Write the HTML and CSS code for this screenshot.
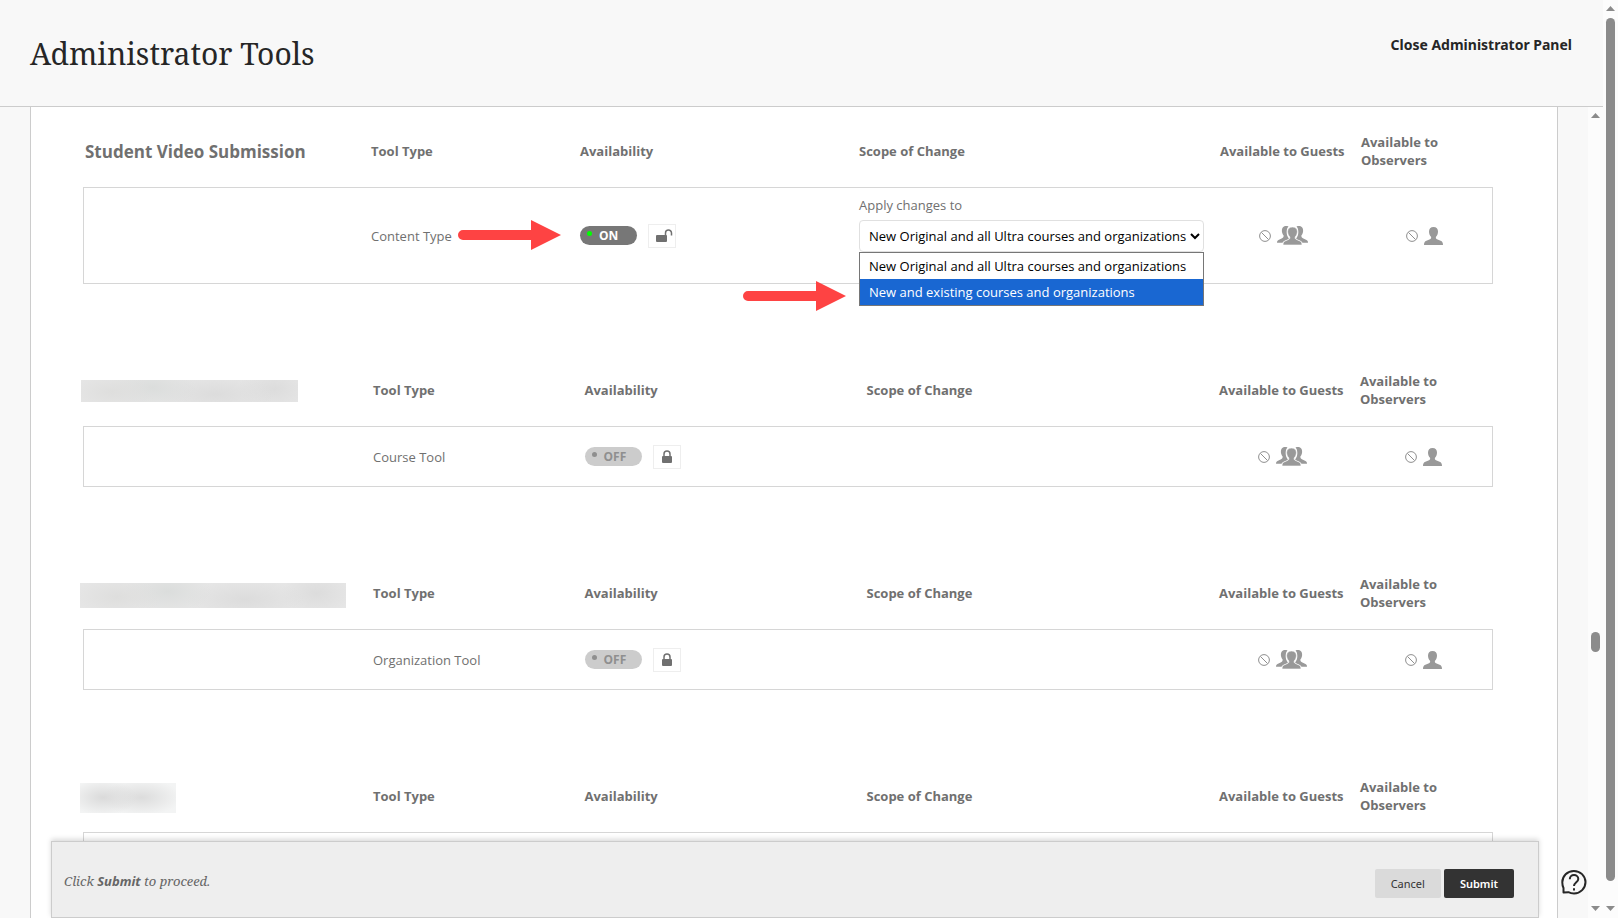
FILE: index.html
```html
<!DOCTYPE html>
<html lang="en">
<head>
    <meta charset="UTF-8">
    <meta name="viewport" content="width=device-width, initial-scale=1.0">
    <title>Administrator Tools</title>
    <link rel="stylesheet" href="styles.css">
</head>
<body>

    <!-- Shared icons -->
    <svg class="sprite" aria-hidden="true">
        <symbol id="icon-none" viewBox="0 0 12 12">
            <circle cx="6" cy="6" r="5.4" fill="none" stroke="#8f8f8f"/>
            <path d="M2.5 2.5l7 7" stroke="#8f8f8f" fill="none"/>
        </symbol>
        <symbol id="icon-person" viewBox="0 0 19 18">
            <path fill="#999" d="M9.5 0C6.5 0 5 1.8 5 4.5c0 2 .7 4 2 5.300.4 1.200.1 2-1 2.500L1.800 14C.7 14.600 0 15.800 0 18h19c0-2.200-.7-3.400-1.800-4L13 12.300c-1.100-.5-1.400-1.300-1-2.500 1.300-1.300 2-3.300 2-5.300C14 1.800 12.500 0 9.500 0z"/>
        </symbol>
        <symbol id="icon-people" viewBox="0 0 31 19">
            <path fill="#999" d="M11.500.5C9.500-.3 7.200 0 6 1.200 4.800 2.500 4.700 4.800 5.100 6.500c.3 1.300.9 2.300 1.500 3 .2 1.500-.6 2.300-2 2.900L1.500 14C.5 14.500 0 15.300 0 16.700h5.500c.6-1.300 1.700-1.900 3.500-2.500 1.700-.5 2.900-1 2.800-1.700C10.500 10.500 9.500 8.500 9.700 5.500 9.800 3.300 10.300 1.700 11.500.5z"/>
            <path fill="#999" transform="matrix(-1 0 0 1 31 0)" d="M11.500.5C9.500-.3 7.200 0 6 1.200 4.800 2.500 4.700 4.800 5.100 6.500c.3 1.300.9 2.300 1.500 3 .2 1.500-.6 2.300-2 2.900L1.500 14C.5 14.500 0 15.300 0 16.700h5.500c.6-1.300 1.700-1.900 3.500-2.500 1.700-.5 2.900-1 2.800-1.700C10.500 10.500 9.500 8.500 9.700 5.500 9.800 3.300 10.300 1.700 11.500.5z"/>
            <path fill="#999" stroke="#fff" stroke-width=".6" d="M15.500 1c-3.200 0-4.900 1.800-4.900 4.500 0 2 .8 4 2.100 5.300.4 1.400 0 2.200-1.200 2.700L8 15c-1.200.6-1.900 1.700-2 4h19c-.1-2.300-.8-3.400-2-4l-3.500-1.500c-1.200-.5-1.600-1.300-1.200-2.700 1.300-1.300 2.100-3.300 2.100-5.300C20.400 2.800 18.700 1 15.500 1z"/>
        </symbol>
        <symbol id="icon-lock" viewBox="0 0 12 14">
            <path d="M3 7V4a3 3 0 0 1 6 0v3" fill="none" stroke="#707070" stroke-width="1.5"/>
            <rect x="1" y="6" width="10" height="7" rx="1" fill="#707070"/>
        </symbol>
        <symbol id="icon-unlock" viewBox="0 0 17 14">
            <path d="M9.500 7V4a3 3 0 0 1 6 0v2.500" fill="none" stroke="#707070" stroke-width="1.5"/>
            <rect x="0" y="6" width="11" height="7" rx="1" fill="#707070"/>
        </symbol>
        <symbol id="icon-arrow" viewBox="0 0 103 30">
            <path d="M5 10h68V0l30 15-30 15V20H5a5 5 0 0 1 0-10z" fill="#fe4343"/>
        </symbol>
    </svg>

    <div class="window">
        <div class="main">
            <header class="page-header">
                <h1>Administrator Tools</h1>
                <a href="#" class="close-link">Close Administrator Panel</a>
            </header>

            <div class="frame">
                <div class="viewport">
                    <main class="panel">

                        <table class="tool current">
                            <thead>
                                <tr>
                                    <th class="col-name"><h2>Student Video Submission</h2></th>
                                    <th class="col-type">Tool Type</th>
                                    <th class="col-avail">Availability</th>
                                    <th class="col-scope">Scope of Change</th>
                                    <th class="col-guests">Available to Guests</th>
                                    <th>Available to<br>Observers</th>
                                </tr>
                            </thead>
                            <tbody>
                                <tr>
                                    <td></td>
                                    <td>Content Type</td>
                                    <td>
                                        <div class="avail">
                                            <svg class="arrow arrow-toggle" aria-hidden="true"><use href="#icon-arrow"/></svg>
                                            <button type="button" class="toggle on">ON</button>
                                            <button type="button" class="lock" aria-label="Lock"><svg width="17" height="14"><use href="#icon-unlock"/></svg></button>
                                        </div>
                                    </td>
                                    <td>
                                        <div class="scope">
                                            <label for="scope">Apply changes to</label>
                                            <select id="scope">
                                                <option>New Original and all Ultra courses and organizations</option>
                                                <option>New and existing courses and organizations</option>
                                            </select>
                                            <div class="popup">
                                                <svg class="arrow arrow-option" aria-hidden="true"><use href="#icon-arrow"/></svg>
                                                <ul role="listbox">
                                                    <li role="option">New Original and all Ultra courses and organizations</li>
                                                    <li role="option" class="selected">New and existing courses and organizations</li>
                                                </ul>
                                            </div>
                                        </div>
                                    </td>
                                    <td><div class="status guests"><svg width="12" height="12"><use href="#icon-none"/></svg><svg width="31" height="19"><use href="#icon-people"/></svg></div></td>
                                    <td><div class="status"><svg width="12" height="12"><use href="#icon-none"/></svg><svg width="19" height="18"><use href="#icon-person"/></svg></div></td>
                                </tr>
                            </tbody>
                        </table>

                        <table class="tool">
                            <thead>
                                <tr>
                                    <th class="col-name"><div class="redacted redacted-course"></div></th>
                                    <th class="col-type">Tool Type</th>
                                    <th class="col-avail">Availability</th>
                                    <th class="col-scope">Scope of Change</th>
                                    <th class="col-guests">Available to Guests</th>
                                    <th>Available to<br>Observers</th>
                                </tr>
                            </thead>
                            <tbody>
                                <tr>
                                    <td></td>
                                    <td>Course Tool</td>
                                    <td>
                                        <div class="avail">
                                            <button type="button" class="toggle">OFF</button>
                                            <button type="button" class="lock" aria-label="Unlock"><svg width="12" height="14"><use href="#icon-lock"/></svg></button>
                                        </div>
                                    </td>
                                    <td></td>
                                    <td><div class="status guests"><svg width="12" height="12"><use href="#icon-none"/></svg><svg width="31" height="19"><use href="#icon-people"/></svg></div></td>
                                    <td><div class="status"><svg width="12" height="12"><use href="#icon-none"/></svg><svg width="19" height="18"><use href="#icon-person"/></svg></div></td>
                                </tr>
                            </tbody>
                        </table>

                        <table class="tool">
                            <thead>
                                <tr>
                                    <th class="col-name"><div class="redacted redacted-org"></div></th>
                                    <th class="col-type">Tool Type</th>
                                    <th class="col-avail">Availability</th>
                                    <th class="col-scope">Scope of Change</th>
                                    <th class="col-guests">Available to Guests</th>
                                    <th>Available to<br>Observers</th>
                                </tr>
                            </thead>
                            <tbody>
                                <tr>
                                    <td></td>
                                    <td>Organization Tool</td>
                                    <td>
                                        <div class="avail">
                                            <button type="button" class="toggle">OFF</button>
                                            <button type="button" class="lock" aria-label="Unlock"><svg width="12" height="14"><use href="#icon-lock"/></svg></button>
                                        </div>
                                    </td>
                                    <td></td>
                                    <td><div class="status guests"><svg width="12" height="12"><use href="#icon-none"/></svg><svg width="31" height="19"><use href="#icon-people"/></svg></div></td>
                                    <td><div class="status"><svg width="12" height="12"><use href="#icon-none"/></svg><svg width="19" height="18"><use href="#icon-person"/></svg></div></td>
                                </tr>
                            </tbody>
                        </table>

                        <table class="tool">
                            <thead>
                                <tr>
                                    <th class="col-name"><div class="redacted redacted-grades"></div></th>
                                    <th class="col-type">Tool Type</th>
                                    <th class="col-avail">Availability</th>
                                    <th class="col-scope">Scope of Change</th>
                                    <th class="col-guests">Available to Guests</th>
                                    <th>Available to<br>Observers</th>
                                </tr>
                            </thead>
                            <tbody>
                                <tr>
                                    <td></td>
                                    <td></td>
                                    <td></td>
                                    <td></td>
                                    <td></td>
                                    <td></td>
                                </tr>
                            </tbody>
                        </table>

                    </main>

                    <!-- Sticky submit bar -->
                    <footer class="submit-bar">
                        <p>Click <strong>Submit</strong> to proceed.</p>
                        <div class="actions">
                            <button type="button" class="btn">Cancel</button>
                            <button type="submit" class="btn primary">Submit</button>
                        </div>
                    </footer>

                    <button type="button" class="help" aria-label="Help">
                        <svg width="26" height="26" viewBox="0 0 26 26" fill="none" stroke="#262626" stroke-width="2">
                            <path d="M2.500 23.500V19C1.600 17.200 1.300 15.500 1.300 13.300A11.600 11.300 0 1 1 13 24.500c-2.200 0-3.900-.4-5.600-1.300z" stroke-linejoin="round"/>
                            <path d="M8.800 10.200C8.800 7.800 10.600 6 13 6s4.300 1.700 4.300 3.900c0 3.100-4.300 3.500-4.300 7.100"/>
                            <path d="M13 19.200v2.200"/>
                        </svg>
                    </button>
                </div>

                <div class="scrollbar">
                    <i class="up"></i>
                    <div class="track"><div class="thumb thumb-small"></div></div>
                    <i class="down"></i>
                </div>
            </div>
        </div>

        <div class="scrollbar">
            <i class="up"></i>
            <div class="track"><div class="thumb"></div></div>
            <i class="down"></i>
        </div>
    </div>

</body>
</html>
```
FILE: styles.css
```css
* {
    box-sizing: border-box;
}

body {
    margin: 0;
    font-family: "Open Sans", "Noto Sans", sans-serif;
    font-size: 13px;
    line-height: 18px;
    color: #707070;
    background-color: #f8f8f8;
}

h1, h2, p, ul {
    margin: 0;
    padding: 0;
}

button {
    font-family: inherit;
    cursor: pointer;
}

svg {
    display: block;
    flex: none;
}

.sprite {
    position: absolute;
    width: 0;
    height: 0;
}

.window {
    display: flex;
    height: 100vh;
    overflow: hidden;
}

.main {
    flex: 1;
    min-width: 0;
    display: flex;
    flex-direction: column;
}

/* Header */
.page-header {
    flex: none;
    display: flex;
    justify-content: space-between;
    align-items: flex-start;
    height: 107px;
    padding: 32px 31px 0 30px;
    border-bottom: 1px solid #ccc;
}

.page-header h1 {
    font-family: "Noto Serif", "DejaVu Serif Condensed", serif;
    font-size: 30px;
    font-weight: normal;
    line-height: 43px;
    color: #262626;
}

.close-link {
    margin-top: 4px;
    font-family: "Noto Sans", "Open Sans", sans-serif;
    font-size: 14px;
    font-weight: bold;
    color: #262626;
    text-decoration: none;
}

/* Content frame */
.frame {
    flex: 1;
    min-height: 0;
    display: flex;
}

.viewport {
    position: relative;
    flex: 1;
    min-width: 0;
    padding: 0 30px;
    overflow: hidden;
}

.panel {
    min-height: 100%;
    padding: 8px 64px 0 52px;
    background-color: #fff;
    border: 1px solid #ccc;
    border-width: 0 1px;
}

/* Tool tables */
.tool {
    width: 100%;
    table-layout: fixed;
    border-spacing: 0;
    margin-bottom: 70px;
}

.tool th, .tool td {
    padding: 0 0 0 2px;
    text-align: left;
}

.tool th {
    height: 72px;
    white-space: nowrap;
}

.tool td {
    height: 61px;
    border: 1px solid #d6d6d6;
    border-width: 1px 0;
}

.tool td:first-child {
    border-left-width: 1px;
}

.tool td:last-child {
    border-right-width: 1px;
}

.tool h2 {
    padding-top: 2px;
    font-size: 17px;
    line-height: 24px;
}

.current td {
    height: 97px;
}

.col-name { width: 288px; }
.col-type { width: 15%; }
.col-avail { width: 20%; }
.col-scope { width: 25%; }
.col-guests { width: 10%; }

.current .col-name { width: 286px; }
.current .col-type { width: 209px; }
.current .col-avail { width: 279px; }
.current .col-scope { width: 361px; }

.avail {
    position: relative;
    display: flex;
    align-items: center;
    gap: 11px;
}

.toggle {
    display: flex;
    align-items: center;
    gap: 7px;
    width: 57px;
    height: 19px;
    padding: 0 0 0 7px;
    border: 0;
    border-radius: 10px;
    background-color: #ccc;
    color: #8f8f8f;
    font-size: 12px;
    font-weight: bold;
    line-height: 19px;
}

.toggle::before {
    content: "";
    width: 5px;
    height: 5px;
    margin-bottom: 4px;
    border-radius: 50%;
    background-color: #8f8f8f;
}

.toggle.on {
    background-color: #777;
    color: #fff;
}

.toggle.on::before {
    background-color: #0f0;
}

.lock {
    display: flex;
    align-items: center;
    justify-content: center;
    width: 28px;
    height: 24px;
    padding: 0;
    border: 1px solid #eee;
    background-color: #fff;
}

.current .lock {
    padding-left: 4px;
}

.status {
    display: flex;
    align-items: center;
    justify-content: center;
    gap: 6px;
    padding-right: 5px;
}

.status.guests {
    padding-right: 12px;
}

/* Scope drop-down with its open list */
.scope {
    position: relative;
    display: flex;
    flex-direction: column;
    gap: 6px;
    width: 345px;
    padding-bottom: 24px;
}

.scope select {
    height: 32px;
    padding: 0 0 0 5px;
    border: 1px solid #e0e0e0;
    border-radius: 4px;
    background-color: #fff;
    color: #000;
    font-family: inherit;
    font-size: 13px;
}

.popup {
    position: absolute;
    top: 56px;
    left: 0;
    width: 100%;
    z-index: 2;
}

.popup ul {
    list-style: none;
    border: 1px solid #767676;
    background-color: #fff;
    color: #000;
}

.popup li {
    padding: 4px 9px;
    white-space: nowrap;
}

.popup .selected {
    background-color: #1967d2;
    color: #fff;
}

/* Red pointers */
.arrow {
    position: absolute;
    right: 100%;
    width: 103px;
    height: 30px;
}

.arrow-toggle {
    top: -4px;
    margin-right: 19px;
}

.arrow-option {
    top: 29px;
    margin-right: 13px;
}

/* Obscured tool names */
.redacted {
    margin: 2px 0 0 -4px;
    background-color: #e6e6e6;
    background-image:
        radial-gradient(44px 20px at 14% 55%, #dededd, transparent),
        radial-gradient(44px 22px at 33% 35%, #dbdddc, transparent),
        radial-gradient(60px 20px at 62% 65%, #dcdcdc, transparent),
        radial-gradient(36px 22px at 89% 40%, #dcdcdc, transparent);
}

.redacted-course {
    width: 217px;
    height: 22px;
}

.redacted-org {
    width: 266px;
    height: 25px;
    margin: 4px 0 0 -5px;
}

.redacted-grades {
    width: 96px;
    height: 30px;
    margin: 4px 0 0 -5px;
    background-color: #f3f4f4;
    background-image:
        radial-gradient(34px 18px at 24% 48%, #dadada, transparent),
        radial-gradient(40px 18px at 64% 48%, #dcdcdc, transparent);
}

/* Submit bar */
.submit-bar {
    position: absolute;
    left: 51px;
    right: 49px;
    bottom: 0;
    display: flex;
    justify-content: space-between;
    align-items: flex-start;
    height: 77px;
    padding: 27px 24px 0 12px;
    border: 1px solid #ccc;
    background-color: #eee;
    box-shadow: 0 -2px 5px rgba(0, 0, 0, 0.15);
    z-index: 3;
}

.submit-bar p {
    margin-top: 3px;
    font-family: "Noto Serif", "DejaVu Serif Condensed", serif;
    font-size: 13px;
    font-style: italic;
    color: #666;
}

.submit-bar strong {
    font-family: "Noto Sans", "Open Sans", sans-serif;
}

.actions {
    display: flex;
    gap: 3px;
}

.btn {
    height: 29px;
    padding: 0 16px 1px;
    border: 0;
    border-radius: 2px;
    background-color: #dadada;
    color: #333;
    font-family: "Noto Sans", "Open Sans", sans-serif;
    font-size: 11px;
}

.btn.primary {
    background-color: #333;
    color: #fff;
    font-weight: 600;
}

.help {
    position: absolute;
    right: 1px;
    bottom: 23px;
    padding: 0;
    border: 0;
    background: none;
}

/* Scrollbars */
.scrollbar {
    flex: none;
    display: flex;
    flex-direction: column;
    align-items: center;
    width: 15px;
    padding: 6px 0 7px;
    background-color: #fcfcfc;
}

.scrollbar i {
    width: 9px;
    height: 5px;
    background-color: #8b8b8b;
}

.scrollbar .up {
    clip-path: polygon(50% 0, 100% 100%, 0 100%);
}

.scrollbar .down {
    clip-path: polygon(0 0, 100% 0, 50% 100%);
}

.track {
    flex: 1;
    width: 9px;
    padding: 7px 0 25px;
}

.thumb {
    height: 100%;
    border-radius: 5px;
    background-color: #8b8b8b;
}

.thumb-small {
    height: 20px;
    margin-top: 507px;
}
```
